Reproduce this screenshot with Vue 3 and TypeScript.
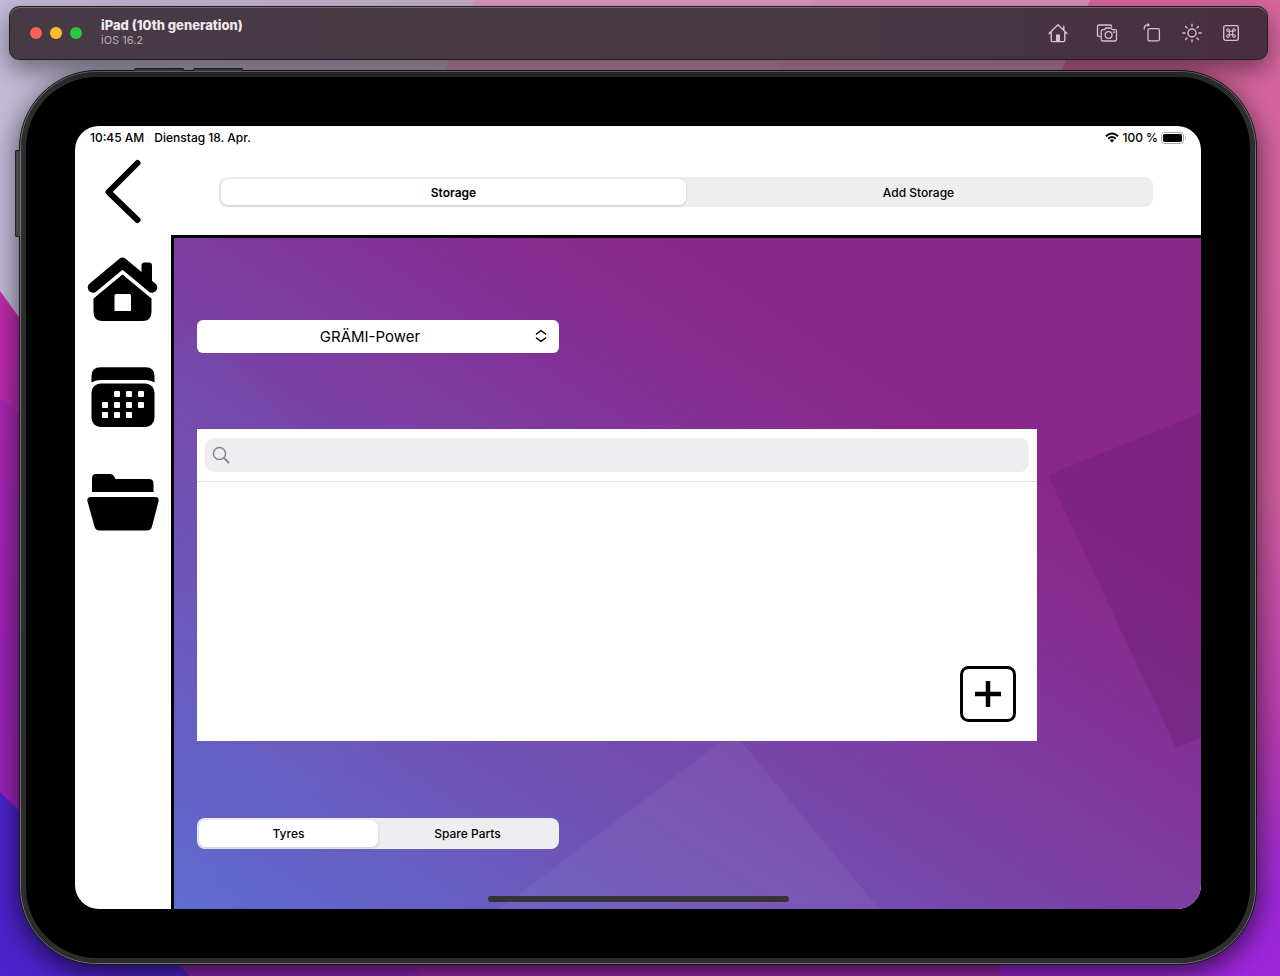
<script setup lang="ts">
import { ref } from 'vue'

const storageTabs = ['Storage', 'Add Storage']
const categories = ['Tyres', 'Spare Parts']
const companies = ['GRÄMI-Power']

const activeTab = ref('Storage')
const activeCategory = ref('Tyres')
const company = ref('GRÄMI-Power')
const query = ref('')

const calendarDots: [number, number][] = [
  [27, 28], [39, 28], [51, 28],
  [15, 39], [27, 39], [39, 39], [51, 39],
  [15, 49], [27, 49], [39, 49],
]
</script>

<template>
  <div class="desktop">
    <svg class="wallpaper" viewBox="0 0 1280 976" preserveAspectRatio="none" aria-hidden="true">
      <defs>
        <linearGradient id="wallTop" x1="0" y1="0" x2="1" y2="0">
          <stop offset="0" stop-color="#c3bbd8" />
          <stop offset="0.4" stop-color="#c6aeca" />
          <stop offset="1" stop-color="#d3a0c4" />
        </linearGradient>
        <linearGradient id="wallRight" x1="0" y1="0" x2="0" y2="1">
          <stop offset="0" stop-color="#d7669f" />
          <stop offset="0.5" stop-color="#cf5f9f" />
          <stop offset="0.76" stop-color="#b53bb0" />
          <stop offset="0.92" stop-color="#9c27d6" />
          <stop offset="1" stop-color="#9e27dc" />
        </linearGradient>
        <linearGradient id="wallLeft" x1="0" y1="0" x2="0" y2="1">
          <stop offset="0" stop-color="#c42bae" />
          <stop offset="0.4" stop-color="#a126b4" />
          <stop offset="1" stop-color="#8d25c2" />
        </linearGradient>
      </defs>
      <rect width="1280" height="976" fill="url(#wallTop)" />
      <path d="M475 0H1280V976H600L445 70Z" fill="#d897bc" />
      <path d="M815 0H1280V976H600L780 70Z" fill="#d990bb" />
      <path d="M1090 0H1280V976H500L1062 70Z" fill="url(#wallRight)" />
      <path d="M0 291L640 1176V976H0Z" fill="url(#wallLeft)" />
      <path d="M0 400L22 414V850L0 830Z" fill="#9022b4" opacity="0.4" />
      <path d="M0 976L190 930H640V976Z" fill="#8f25b4" />
      <path d="M0 792L190 976H0Z" fill="#4c22cc" />
      <path d="M420 976L380 930H1000V976Z" fill="#a324b4" />
    </svg>

    <header class="titlebar">
      <div class="lights">
        <button class="light close" type="button" aria-label="Close"></button>
        <button class="light minimise" type="button" aria-label="Minimise"></button>
        <button class="light zoom" type="button" aria-label="Zoom"></button>
      </div>
      <div class="device-name">
        <strong>iPad (10th generation)</strong>
        <span>iOS 16.2</span>
      </div>
      <div class="tools">
        <button type="button" aria-label="Home">
          <svg width="22" height="22" viewBox="0 0 22 22" fill="none" stroke="currentColor" stroke-width="1.4" stroke-linecap="round" stroke-linejoin="round">
            <path d="M2 11.5L11 2.7L20 11.5M4.2 10V18.3Q4.2 19.6 5.5 19.6H16.5Q17.8 19.6 17.8 18.3V10M16.8 7.8V4.2" />
            <path d="M9 19.5V12.5H13V19.5Z" fill="currentColor" stroke="none" />
          </svg>
        </button>
        <button type="button" aria-label="Screenshot">
          <svg width="22" height="22" viewBox="0 0 22 22" fill="none" stroke="currentColor" stroke-width="1.3" stroke-linejoin="round" stroke-linecap="round">
            <path d="M3.6 14.4H3.2Q1.5 14.4 1.5 12.7V4.7Q1.5 3 3.2 3H14Q15.6 3 15.7 4.4" />
            <path d="M7 7.6H8.6L9.8 6H15L16.2 7.6H18.8Q20.5 7.6 20.5 9.3V17.3Q20.5 19 18.8 19H6.9Q5.2 19 5.2 17.3V9.3Q5.2 7.6 7 7.6Z" />
            <circle cx="12.6" cy="13" r="3.4" />
            <circle cx="18" cy="10.3" r="0.4" />
          </svg>
        </button>
        <button type="button" aria-label="Rotate">
          <svg width="22" height="22" viewBox="0 0 22 22" fill="none" stroke="currentColor" stroke-width="1.3" stroke-linejoin="round" stroke-linecap="round">
            <rect x="7" y="6.7" width="11.4" height="12.2" rx="1.5" />
            <path d="M3.2 7Q3.2 3 6.6 2.9" />
            <path d="M6.3 0.9L9.2 2.9L6.3 4.9Z" fill="currentColor" stroke="none" />
          </svg>
        </button>
        <button type="button" aria-label="Appearance">
          <svg width="22" height="22" viewBox="0 0 22 22" fill="none" stroke="currentColor" stroke-width="1.4" stroke-linecap="round">
            <circle cx="11" cy="11" r="4" />
            <path d="M11 2.3V4M11 18V19.7M1.8 11H4M18 11H20.2M4.6 4.6L6 6M16 16L17.4 17.4M4.6 17.4L6 16M16 6L17.4 4.6" />
          </svg>
        </button>
        <button type="button" aria-label="Keyboard shortcuts">
          <svg width="22" height="22" viewBox="0 0 22 22" fill="none" stroke="currentColor" stroke-width="1.3">
            <rect x="3.7" y="3.7" width="14.6" height="14.6" rx="2" />
            <path d="M9.3 9.3H12.7V12.7H9.3ZM9.3 9.3H8.2A1.3 1.3 0 1 1 9.3 8.1ZM12.7 9.3V8.1A1.3 1.3 0 1 1 13.9 9.3ZM12.7 12.7H13.9A1.3 1.3 0 1 1 12.7 13.9ZM9.3 12.7V13.9A1.3 1.3 0 1 1 8.1 12.7Z" stroke-width="1.1" />
          </svg>
        </button>
      </div>
    </header>

    <div class="device">
      <i class="hardware volume-up"></i>
      <i class="hardware volume-down"></i>
      <i class="hardware power"></i>
      <div class="bezel">
        <div class="screen">
          <div class="statusbar">
            <span>10:45 AM</span>
            <span>Dienstag 18. Apr.</span>
            <span class="battery">
              <svg width="14" height="11" viewBox="0 0 14 11" fill="none" stroke="#000" stroke-width="1.9" aria-hidden="true">
                <path d="M1 4.2Q7 -1.4 13 4.2" />
                <path d="M3.3 6.7Q7 3.3 10.7 6.7" />
                <path d="M4.8 8.2Q7 6.4 9.2 8.2L7 10.5Z" fill="#000" stroke="none" />
              </svg>
              <span>100 %</span>
              <svg width="26" height="12" viewBox="0 0 26 12" aria-hidden="true">
                <rect x="0.5" y="0.5" width="22" height="11" rx="3.2" fill="none" stroke="#a2a2a2" />
                <rect x="2" y="2" width="19" height="8" rx="1.8" />
                <path d="M24 4Q26 6 24 8Z" fill="#a2a2a2" />
              </svg>
            </span>
          </div>

          <div class="topbar">
            <button class="back" type="button" aria-label="Back">
              <svg width="40" height="66" viewBox="0 0 40 66" fill="none" stroke="#000" stroke-width="6" stroke-linecap="round" stroke-linejoin="round">
                <path d="M34.500 4L5.500 33L34.500 61" />
              </svg>
            </button>
            <div class="segments wide" role="group" aria-label="Storage view">
              <button
                v-for="tab in storageTabs"
                :key="tab"
                type="button"
                :class="{ active: tab === activeTab }"
                :aria-pressed="tab === activeTab"
                @click="activeTab = tab"
              >{{ tab }}</button>
            </div>
          </div>

          <div class="body">
            <nav class="sidebar" aria-label="Main">
              <button type="button" aria-label="Home">
                <svg width="72" height="66" viewBox="0 0 72 66">
                  <path d="M6 31.500L35.500 7L65 31.500" fill="none" stroke="#000" stroke-width="10.500" stroke-linecap="round" stroke-linejoin="round" />
                  <rect x="54.500" y="6.500" width="10.500" height="24" rx="3" />
                  <path fill-rule="evenodd" d="M6.500 42.500L35.500 18.500L64.500 42.500V56Q64.500 65 55.500 65H15.500Q6.500 65 6.500 56ZM29 38Q27.500 38 27.500 39.500V55H44V39.500Q44 38 42.500 38Z" />
                </svg>
              </button>
              <button type="button" aria-label="Calendar">
                <svg width="72" height="66" viewBox="0 0 72 66">
                  <path d="M4.500 19.500V13Q4.500 4.300 13.500 4.300H58.500Q67.500 4.300 67.500 13V19.500Q64 17 59 17H13Q8 17 4.500 19.500Z" />
                  <rect x="4.500" y="20.500" width="63" height="43.500" rx="9" />
                  <rect v-for="[x, y] in calendarDots" :key="`${x}-${y}`" :x="x" :y="y" width="6" height="6" rx="1" fill="#fff" />
                </svg>
              </button>
              <button type="button" aria-label="Folders">
                <svg width="72" height="66" viewBox="0 0 72 66">
                  <path d="M5 22V8Q5 4 9 4H23Q26 4 27.500 7L28.500 9H62Q66.500 9 66.500 13.500V22Z" />
                  <path d="M4 27H68Q72.500 27 71.500 31.500L65 56.500Q64 60.500 60 60.500H12.500Q8.500 60.500 7.500 56.500L0.500 31.500Q-0.500 27 4 27Z" />
                </svg>
              </button>
            </nav>

            <main class="content">
              <svg class="backdrop" viewBox="0 0 1028 671" preserveAspectRatio="none" aria-hidden="true">
                <path d="M1028 175L875 237L1003 510L1028 500Z" fill="#60206e" opacity="0.32" />
                <path d="M560 494L326 671H706Z" fill="#fff" opacity="0.05" />
                <path d="M0 107L23 92L300 369V420L0 671Z" fill="#6e70d0" opacity="0.1" />
              </svg>

              <div class="picker">
                <select v-model="company" aria-label="Company">
                  <option v-for="name in companies" :key="name">{{ name }}</option>
                </select>
                <svg width="12" height="14" viewBox="0 0 12 14" fill="none" stroke="#000" stroke-width="1.5" stroke-linecap="round" stroke-linejoin="round" aria-hidden="true">
                  <path d="M1.500 5L6 1.500L10.500 5M1.500 9L6 12.500L10.500 9" />
                </svg>
              </div>

              <section class="panel" aria-label="Stored items">
                <div class="search-row">
                  <label class="search">
                    <svg width="18" height="18" viewBox="0 0 18 18" fill="none" stroke="#85858a" stroke-width="1.5" stroke-linecap="round" aria-hidden="true">
                      <circle cx="7.500" cy="7.500" r="6" />
                      <path d="M12 12L16.500 16.500" stroke-width="1.800" />
                    </svg>
                    <input v-model="query" type="search" aria-label="Search" />
                  </label>
                </div>
                <button class="add" type="button" aria-label="Add item">
                  <svg width="56" height="56" viewBox="0 0 56 56" fill="none" stroke="#000">
                    <rect x="1.500" y="1.500" width="53" height="53" rx="7" stroke-width="3" />
                    <path d="M28 15V41M15 28H41" stroke-width="4.500" />
                  </svg>
                </button>
              </section>

              <div class="segments narrow" role="group" aria-label="Category">
                <button
                  v-for="category in categories"
                  :key="category"
                  type="button"
                  :class="{ active: category === activeCategory }"
                  :aria-pressed="category === activeCategory"
                  @click="activeCategory = category"
                >{{ category }}</button>
              </div>
            </main>
          </div>
          <i class="home-indicator"></i>
        </div>
      </div>
    </div>
  </div>
</template>

<style>
body {
  margin: 0;
}
</style>

<style scoped>
* {
  box-sizing: border-box;
}

button,
select,
input {
  margin: 0;
  padding: 0;
  border: 0;
  background: none;
  color: inherit;
  font: inherit;
}

button {
  cursor: pointer;
}

svg {
  display: block;
}

.desktop {
  position: relative;
  display: flex;
  flex-direction: column;
  gap: 10px;
  min-height: 100vh;
  padding: 6px 0 11px;
  overflow: hidden;
  font-family: Inter, "Liberation Sans", sans-serif;
  color: #000;
}

.wallpaper {
  position: absolute;
  inset: 0;
  width: 100%;
  height: 100%;
}

.titlebar {
  position: relative;
  z-index: 2;
  display: flex;
  align-items: center;
  height: 54px;
  margin: 0 12px 0 9px;
  padding: 0 17px 0 20px;
  border: 1px solid #211c21;
  border-radius: 10px;
  background: linear-gradient(90deg, #463b45, #463942 60%, #482f40);
  box-shadow: inset 0 1px 0 #766b75, 0 10px 24px rgba(0, 0, 0, 0.45);
}

.lights {
  display: flex;
  gap: 8px;
}

.light {
  width: 12px;
  height: 12px;
  border-radius: 50%;
}

.close {
  background: #fe5f57;
}

.minimise {
  background: #febb2e;
}

.zoom {
  background: #2ac840;
}

.device-name {
  display: flex;
  flex-direction: column;
  flex: 1;
  margin-left: 19px;
  line-height: 15px;
}

.device-name strong {
  font-size: 13px;
  font-weight: 800;
  color: #f0e9ef;
}

.device-name span {
  font-size: 11px;
  color: #b7adb6;
}

.tools {
  display: grid;
  grid-template-columns: 50px 48px 41px 40px 38px;
  justify-items: center;
  color: #dcbfd2;
}

.device {
  position: relative;
  z-index: 1;
  display: flex;
  flex: 1;
  margin: 0 23px 0 19px;
  border: 1px solid #191719;
  border-radius: 78px;
  background: #2c2d2d;
  box-shadow: 0 8px 28px rgba(0, 0, 0, 0.65);
}

.bezel {
  display: flex;
  flex: 1;
  min-width: 0;
  padding: 54px;
  border: 1px solid #757074;
  border-radius: 77px;
  background: #000;
  box-shadow: inset 0 0 0 5px #2c2d2d;
}

.hardware {
  position: absolute;
  border: 1px solid #232023;
  background: #49434a;
}

.volume-up,
.volume-down {
  top: -3px;
  width: 50px;
  height: 3px;
  border-bottom: 0;
  border-radius: 2px 2px 0 0;
}

.volume-up {
  left: 114px;
}

.volume-down {
  left: 173px;
}

.power {
  top: 79px;
  left: -5px;
  width: 5px;
  height: 87px;
  border-right: 0;
  border-radius: 2px 0 0 2px;
}

.screen {
  position: relative;
  display: flex;
  flex: 1;
  flex-direction: column;
  min-width: 0;
  overflow: hidden;
  border-radius: 24px;
  background: #fff;
}

.statusbar {
  display: flex;
  align-items: center;
  gap: 10px;
  height: 23px;
  padding: 0 14px 0 15px;
  font-size: 12px;
  font-weight: 500;
}

.battery {
  display: flex;
  align-items: center;
  gap: 3px;
  margin-left: auto;
}

.topbar {
  display: flex;
  align-items: center;
  height: 86px;
  padding-right: 48px;
}

.back {
  display: grid;
  place-items: center;
  width: 96px;
  margin-right: 48px;
}

.segments {
  display: grid;
  grid-template-columns: 1fr 1fr;
  padding: 2px;
  border-radius: 8px;
  background: #eeeef0;
  font-size: 12px;
  font-weight: 500;
}

.segments button {
  border-radius: 7px;
}

.segments .active {
  background: #fff;
  box-shadow: 0 1px 3px rgba(0, 0, 0, 0.16);
}

.wide {
  flex: 1;
  height: 30px;
}

.wide .active {
  font-weight: 600;
}

.narrow {
  width: 362px;
  max-width: 100%;
  height: 31px;
}

.body {
  display: flex;
  flex: 1;
}

.sidebar {
  display: flex;
  flex-direction: column;
  align-items: center;
  gap: 41px;
  width: 96px;
  padding-top: 21px;
}

.content {
  position: relative;
  display: flex;
  flex: 1;
  flex-direction: column;
  min-width: 0;
  padding: 82px 164px 60px 23px;
  border-top: 3px solid #000;
  border-left: 3px solid #000;
  background: linear-gradient(to top right, #5e6cd1 0%, #6c57b9 22%, #7c3ea4 48%, #8a278a 72%, #8b2689 100%);
}

.backdrop {
  position: absolute;
  inset: 0;
  width: 100%;
  height: 100%;
}

.picker,
.panel,
.narrow {
  position: relative;
}

.picker {
  width: 362px;
  max-width: 100%;
}

.picker select {
  display: block;
  width: 100%;
  height: 33px;
  padding-right: 16px;
  border-radius: 6px;
  appearance: none;
  background: #fff;
  font-size: 15px;
  text-align: center;
  text-align-last: center;
}

.picker svg {
  position: absolute;
  top: 9px;
  right: 12px;
  pointer-events: none;
}

.panel {
  display: flex;
  flex: 1;
  flex-direction: column;
  margin: 76px 0 77px;
  background: #fff;
}

.search-row {
  padding: 9px 8px;
  border-bottom: 1px solid #e3e3e5;
}

.search {
  display: flex;
  align-items: center;
  gap: 8px;
  height: 34px;
  padding: 0 8px 0 7px;
  border-radius: 9px;
  background: #eeeef0;
}

.search input {
  flex: 1;
  min-width: 0;
  outline: 0;
  font-size: 16px;
}

.add {
  align-self: flex-end;
  margin: auto 21px 19px;
}

.home-indicator {
  position: absolute;
  bottom: 7px;
  left: 50%;
  width: 301px;
  height: 6px;
  margin-left: -150px;
  border-radius: 3px;
  background: #353338;
}
</style>
